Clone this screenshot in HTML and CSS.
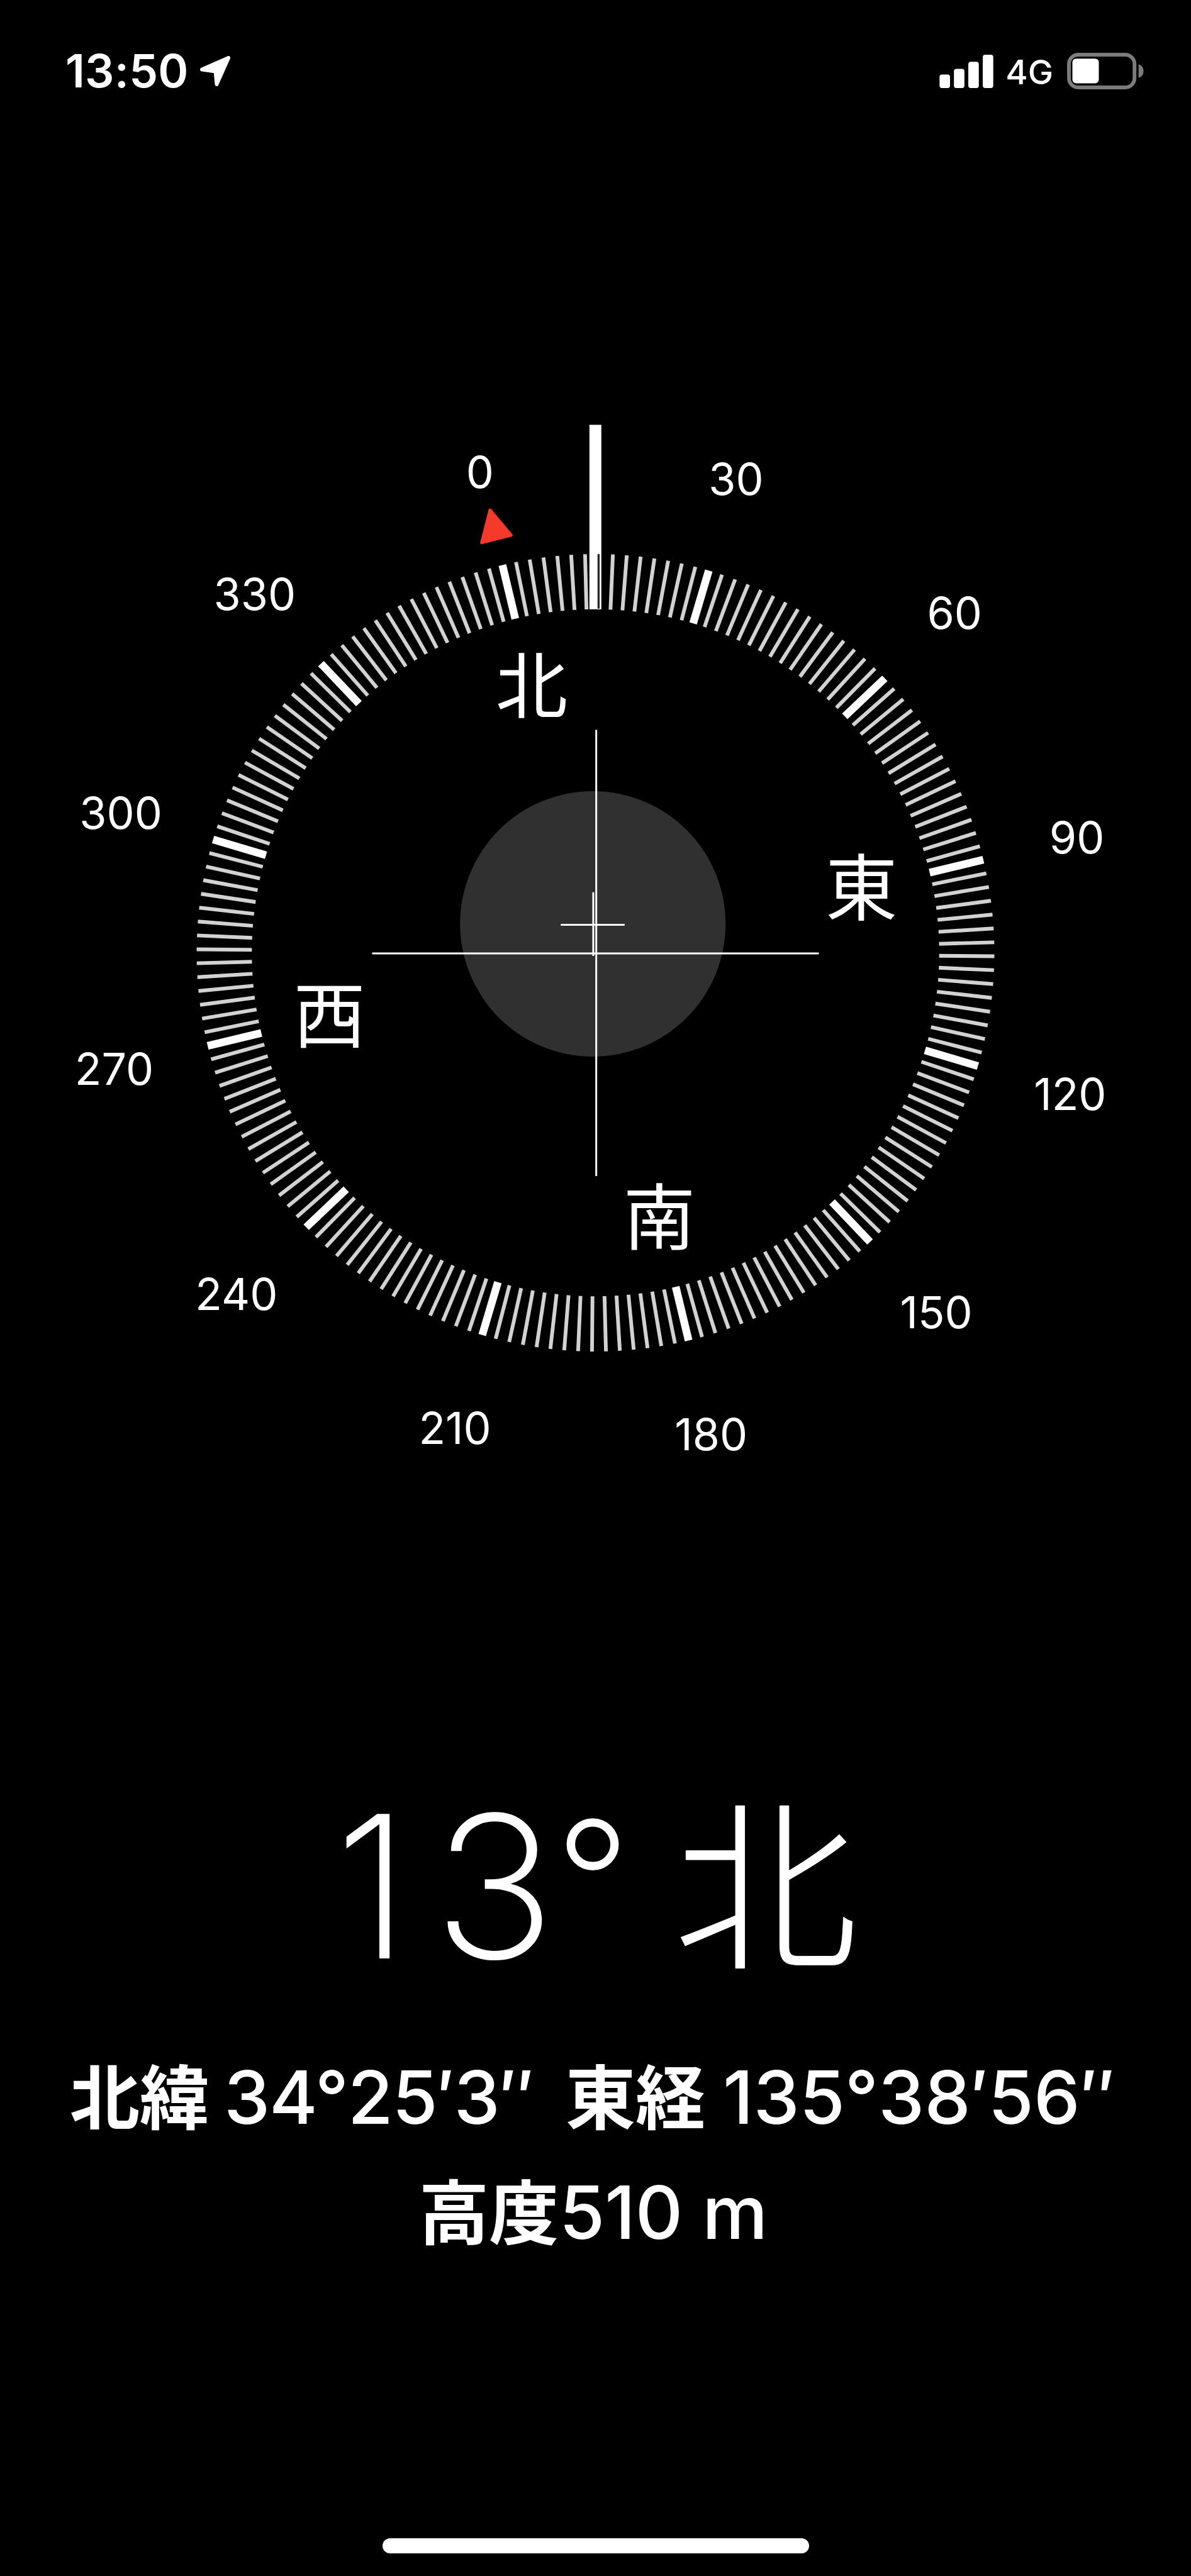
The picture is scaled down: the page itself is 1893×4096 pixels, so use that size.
FILE: index.html
```
<!DOCTYPE html>
<html lang="ja">
<head>
    <meta charset="UTF-8">
    <meta name="viewport" content="width=device-width, initial-scale=1.0">
    <title>コンパス</title>
    <link rel="stylesheet" href="styles.css">
</head>
<body>

    <!-- Status bar -->
    <header class="status-bar">
        <span class="time">13:50</span>
        <svg class="location" viewBox="0 0 50 50">
            <path d="M3 22 L46 3 L27 46 L25 25 L3 22 Z"/>
        </svg>
        <svg class="signal" viewBox="0 0 88 54">
            <rect x="0" y="32" width="17" height="22" rx="4"/>
            <rect x="23.3" y="23" width="17" height="31" rx="4"/>
            <rect x="46.6" y="11.5" width="17" height="42.5" rx="4"/>
            <rect x="70" y="0" width="17" height="54" rx="4"/>
        </svg>
        <span class="network">4G</span>
        <svg class="battery" viewBox="0 0 124 59">
            <rect class="battery-frame" x="3" y="3" width="106" height="53" rx="15"/>
            <rect x="8.6" y="9.3" width="42.7" height="40" rx="6"/>
            <path class="battery-cap" d="M115.6 18.5 Q123.6 21 123.6 29.5 Q123.6 38 115.6 40.5 Z"/>
        </svg>
    </header>

    <!-- Compass dial, centred on 0,0 -->
    <svg class="dial" viewBox="-960 -860 1920 1720">
        <circle class="level" cx="-4.3" cy="-46.7" r="214"/>
        <path class="level-cross" d="M-56 -45.2 H47 M-3.6 -97.5 V5"/>
        <path class="crosshair" d="M-360 1 H360 M1.2 -359.5 V360"/>
        <g id="ticks"></g>
        <rect class="heading-line" x="-9.8" y="-851.5" width="19.2" height="297.5"/>
        <path class="heading-gap" d="M5 -643 V-555"/>
        <path class="north-mark" d="M-170 -714 L-136 -673.5 L-183.5 -661.5 Z"/>
        <g id="labels"></g>
    </svg>

    <!-- Readings -->
    <main class="readout">
        <div class="heading">
            <span class="digit">1</span>
            <span class="digit wide">3</span>
            <span class="degree-sign">°</span>
            <span class="direction">北</span>
        </div>
        <div class="row">
            <span class="kanji">北緯</span>
            <span class="value latitude">34°25′3″</span>
            <span class="kanji east">東経</span>
            <span class="value">135°38′56″</span>
        </div>
        <div class="row altitude">
            <span class="kanji">高度</span>
            <span class="value">510 m</span>
        </div>
    </main>

    <div class="home-indicator"></div>

    <script src="compass.js"></script>
</body>
</html>
```
FILE: compass.js
```
const SVG_NS = 'http://www.w3.org/2000/svg';
const heading = 13.5;

const ticks = document.getElementById('ticks');
const labels = document.getElementById('labels');

// Position on the dial for a bearing, at the given radius
function polar(bearing, radius) {
    const angle = (bearing - heading) * Math.PI / 180;
    return { x: radius * Math.sin(angle), y: -radius * Math.cos(angle) };
}

function addTick(bearing) {
    const inner = polar(bearing, 554);
    const outer = polar(bearing, 643);
    const line = document.createElementNS(SVG_NS, 'line');
    line.setAttribute('x1', inner.x);
    line.setAttribute('y1', inner.y);
    line.setAttribute('x2', outer.x);
    line.setAttribute('y2', outer.y);
    line.setAttribute('class', bearing % 30 === 0 ? 'tick major' : 'tick');
    ticks.appendChild(line);
}

function addLabel(bearing, radius, text, className, baseline) {
    const point = polar(bearing, radius);
    const label = document.createElementNS(SVG_NS, 'text');
    label.setAttribute('x', point.x);
    label.setAttribute('y', point.y + baseline);
    label.setAttribute('class', className);
    label.textContent = text;
    labels.appendChild(label);
}

for (let bearing = 0; bearing < 360; bearing += 2) {
    addTick(bearing);
}

for (let bearing = 0; bearing < 360; bearing += 30) {
    addLabel(bearing, 798, bearing, 'number', 26.5);
}

['北', '東', '南', '西'].forEach((name, i) => {
    addLabel(i * 90, 441, name, 'cardinal', 41);
});
```
FILE: styles.css
```
* {
    box-sizing: border-box;
}

body {
    margin: 0;
    width: 1893px;
    height: 4096px;
    background-color: #000;
    color: #fff;
    font-family: Inter, "Noto Sans CJK JP", sans-serif;
    display: flex;
    flex-direction: column;
    overflow: hidden;
}

svg {
    display: block;
    fill: #fff;
}

/* Status bar */
.status-bar {
    height: 226px;
    padding: 0 75px 0 104px;
    display: flex;
    align-items: center;
}

.time {
    font-size: 73px;
    font-weight: 600;
    letter-spacing: 0.2px;
    line-height: 80px;
}

.location {
    width: 49px;
    height: 49px;
    margin-left: 18px;
}

.location path {
    stroke: #fff;
    stroke-width: 6;
    stroke-linejoin: round;
}

.signal {
    width: 87px;
    height: 53px;
    margin-left: auto;
}

.network {
    margin: 4px 0 0 18px;
    font-size: 54px;
    font-weight: 500;
    line-height: 60px;
}

.battery {
    width: 122px;
    height: 58px;
    margin-left: 22px;
}

.battery-frame {
    fill: none;
    stroke: #7c7c7c;
    stroke-width: 6;
}

.battery-cap {
    fill: #7c7c7c;
}

/* Dial */
.dial {
    width: 1893px;
    height: 1696px;
    margin-top: 441px;
    flex-shrink: 0;
}

.level {
    fill: #303030;
}

.level-cross,
.crosshair {
    fill: none;
    stroke: #fff;
    stroke-width: 3;
}

.tick {
    stroke: #d2d2d2;
    stroke-width: 6;
}

.tick.major {
    stroke: #fff;
    stroke-width: 12.5;
}

.heading-gap {
    stroke: #2a2a2a;
    stroke-width: 3.5;
}

.north-mark {
    fill: #f5392b;
    stroke: #f5392b;
    stroke-width: 5;
    stroke-linejoin: round;
}

.number,
.cardinal {
    text-anchor: middle;
}

.number {
    font-size: 71px;
}

.cardinal {
    font-family: "Noto Sans CJK JP", sans-serif;
    font-size: 116px;
}

/* Readings */
.readout {
    margin-top: 462px;
}

.heading {
    height: 320px;
    padding-left: 532px;
    display: flex;
    align-items: baseline;
    line-height: 320px;
    font-weight: 250;
}

.digit {
    font-size: 313px;
    -webkit-text-stroke: 2px #fff;
}

.wide {
    margin-left: 38px;
    transform: scaleX(1.04);
    transform-origin: left;
}

.degree-sign {
    margin-left: 8px;
    font-size: 260px;
    transform: translateY(-29px);
    -webkit-text-stroke: 3px #fff;
}

.direction {
    margin-left: 69px;
    font-family: "Noto Sans CJK JP", sans-serif;
    font-size: 293px;
    font-weight: 300;
    transform: translateY(-3px);
    -webkit-text-stroke: 1px #fff;
}

.row {
    height: 183px;
    padding-left: 111px;
    display: flex;
    align-items: baseline;
    line-height: 183px;
    font-size: 117px;
    font-weight: 500;
    white-space: nowrap;
}

.heading + .row {
    margin-top: 92px;
}

.kanji {
    font-family: "Noto Sans CJK JP", sans-serif;
    font-size: 111px;
    font-weight: 700;
}

.value {
    margin-left: 28px;
    letter-spacing: -0.1px;
}

.latitude {
    margin-left: 23px;
    letter-spacing: -1.3px;
}

.east {
    margin-left: 51px;
}

.altitude {
    padding-left: 666px;
}

.altitude .value {
    margin-left: 1px;
}

.home-indicator {
    width: 678px;
    height: 24px;
    margin: auto auto 36px;
    border-radius: 12px;
    background-color: #fff;
}
```
